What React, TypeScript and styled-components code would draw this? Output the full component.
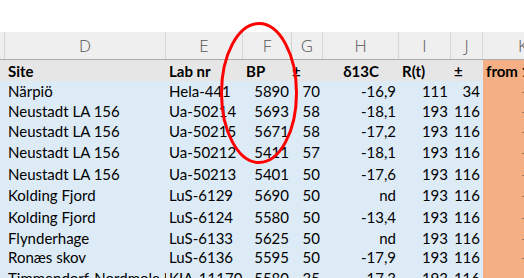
import React from "react";
import styled, { createGlobalStyle } from "styled-components";

const GlobalStyle = createGlobalStyle`
  html, body {
    margin: 0;
    padding: 0;
    background: #ffffff;
    overflow: hidden;
  }
`;

const COLS = "5px 161px 77px 49px 31px 76px 52px 32px 80px";

const Page = styled.div`
  width: 524px;
  height: 278px;
  overflow: hidden;
  position: relative;
  font-family: Lato, "Liberation Sans", sans-serif;
  font-size: 15px;
  color: #000;
`;

const TopSpace = styled.div`
  height: 32px;
  background: #ffffff;
`;

const HeaderBar = styled.div`
  display: grid;
  grid-template-columns: ${COLS};
  height: 27px;
  background: #efefef;
  border-bottom: 1px solid #ababab;
`;

const ColLetter = styled.div`
  display: flex;
  align-items: center;
  justify-content: center;
  border-right: 1px solid #d6d6d6;
  color: #555;
  font-family: "Open Sans", "Liberation Sans", sans-serif;
  font-size: 17px;
  font-weight: 300;
  &:last-child { border-right: none; }
`;

const Row = styled.div<{ $h: number; $head?: boolean }>`
  display: grid;
  grid-template-columns: ${COLS};
  height: ${(p) => p.$h}px;
  background: ${(p) => (p.$head ? "#e7e6e6" : "#ddebf7")};
  font-weight: ${(p) => (p.$head ? 700 : 400)};
`;

const Cell = styled.div<{ $align?: "left" | "right" | "center"; $orange?: boolean; $pad?: number }>`
  display: flex;
  align-items: center;
  justify-content: ${(p) =>
    p.$align === "right" ? "flex-end" : p.$align === "center" ? "center" : "flex-start"};
  padding: 0 3px 0 ${(p) => p.$pad ?? 3}px;
  white-space: nowrap;
  overflow: hidden;
  background: ${(p) => (p.$orange ? "#f4b084" : "transparent")};
`;

const Dash = styled.span`
  color: #7a6a60;
  font-size: 10px;
`;

const Ring = styled.svg`
  position: absolute;
  left: 218px;
  top: 20px;
  pointer-events: none;
`;

type Rec = [string, string, string, string, string, string, string, number];

const rows: Rec[] = [
  ["Närpiö", "Hela-441", "5890", "70", "-16,9", "111", "34", 20],
  ["Neustadt LA 156", "Ua-50214", "5693", "58", "-18,1", "193", "116", 20],
  ["Neustadt LA 156", "Ua-50215", "5671", "58", "-17,2", "193", "116", 20],
  ["Neustadt LA 156", "Ua-50212", "5411", "57", "-18,1", "193", "116", 22],
  ["Neustadt LA 156", "Ua-50213", "5401", "50", "-17,6", "193", "116", 22],
  ["Kolding Fjord", "LuS-6129", "5690", "50", "nd", "193", "116", 20],
  ["Kolding Fjord", "LuS-6124", "5580", "50", "-13,4", "193", "116", 23],
  ["Flynderhage", "LuS-6133", "5625", "50", "nd", "193", "116", 19],
  ["Ronæs skov", "LuS-6136", "5595", "50", "-17,9", "193", "116", 20],
  ["Timmendorf-Nordmole II", "KIA-11170", "5580", "35", "-17,3", "193", "116", 22],
];

const letters = ["", "D", "E", "F", "G", "H", "I", "J", "K"];

export default function App() {
  return (
    <Page>
      <GlobalStyle />
      <TopSpace />
      <HeaderBar>
        {letters.map((l, i) => (
          <ColLetter key={i}>{l}</ColLetter>
        ))}
      </HeaderBar>
      <Row $h={21} $head>
        <Cell />
        <Cell>Site</Cell>
        <Cell>Lab nr</Cell>
        <Cell>BP</Cell>
        <Cell $pad={0}>±</Cell>
        <Cell $align="center">δ13C</Cell>
        <Cell>R(t)</Cell>
        <Cell>±</Cell>
        <Cell $orange>from 1</Cell>
      </Row>
      {rows.map((r, i) => (
        <Row key={i} $h={r[7]}>
          <Cell />
          <Cell>{r[0]}</Cell>
          <Cell>{r[1]}</Cell>
          <Cell $align="right">{r[2]}</Cell>
          <Cell $align="right">{r[3]}</Cell>
          <Cell $align="right">{r[4]}</Cell>
          <Cell $align="right">{r[5]}</Cell>
          <Cell $align="right">{r[6]}</Cell>
          <Cell $orange $align="center">
            <Dash>-</Dash>
          </Cell>
        </Row>
      ))}
      <Ring width="84" height="146" viewBox="0 0 84 146">
        <ellipse cx="41" cy="73" rx="37.5" ry="69.5" fill="none" stroke="#ff0000" strokeWidth="3" />
      </Ring>
    </Page>
  );
}
